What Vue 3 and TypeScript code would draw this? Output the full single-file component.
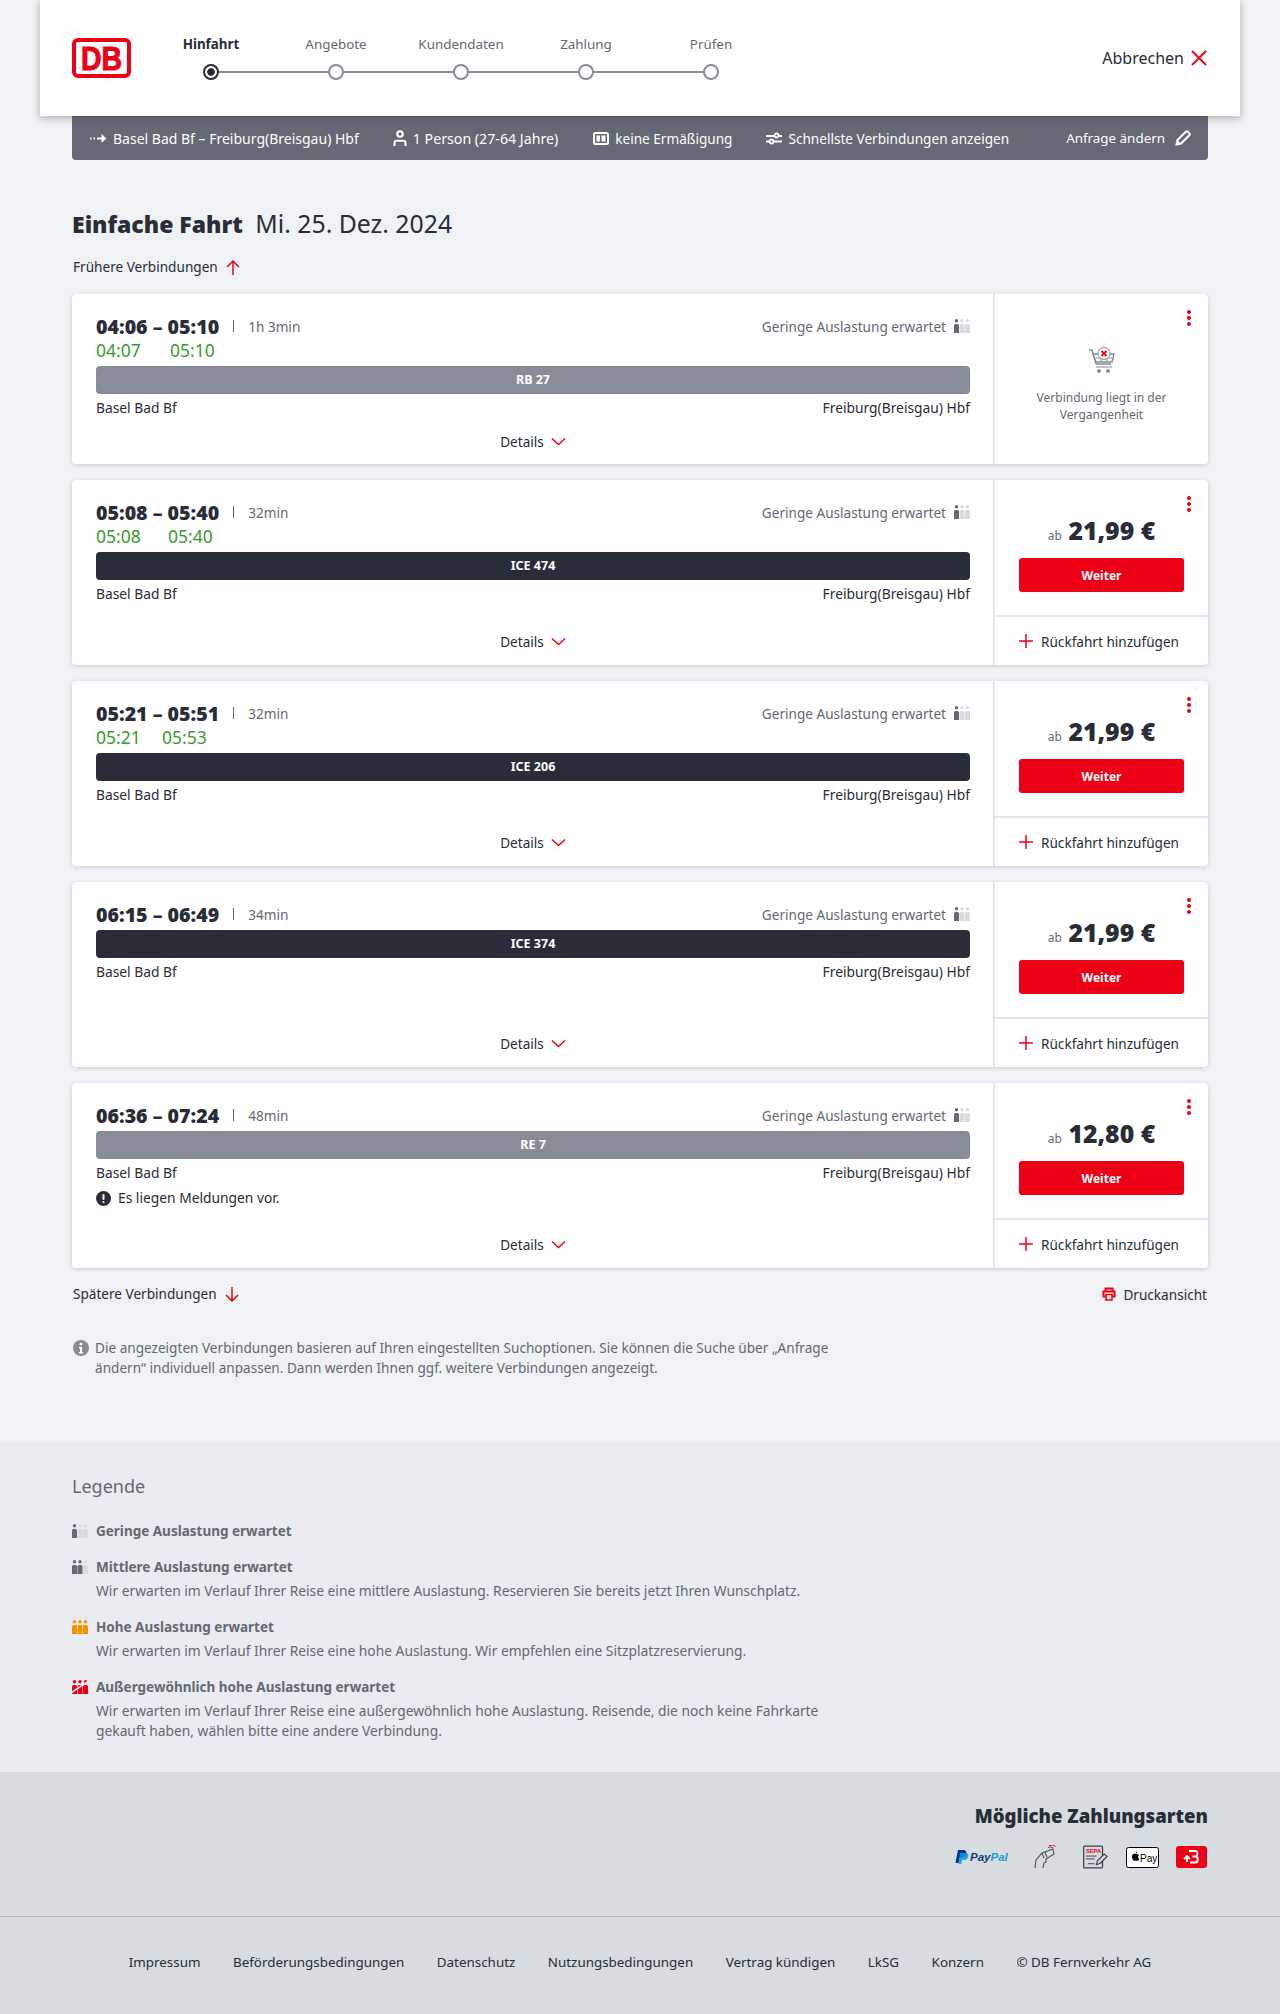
<script setup lang="ts">
import { h } from 'vue'

interface Trip {
  time: string
  duration: string
  dep?: string
  arr?: string
  arrGap?: number
  train: string
  muted?: boolean
  past?: boolean
  price?: string
  notice?: boolean
}

const trips: Trip[] = [
  { time: '04:06 – 05:10', duration: '1h 3min', dep: '04:07', arr: '05:10', arrGap: 74, train: 'RB 27', muted: true, past: true },
  { time: '05:08 – 05:40', duration: '32min', dep: '05:08', arr: '05:40', arrGap: 72, train: 'ICE 474', price: '21,99 €' },
  { time: '05:21 – 05:51', duration: '32min', dep: '05:21', arr: '05:53', arrGap: 66, train: 'ICE 206', price: '21,99 €' },
  { time: '06:15 – 06:49', duration: '34min', train: 'ICE 374', price: '21,99 €' },
  { time: '06:36 – 07:24', duration: '48min', train: 'RE 7', muted: true, price: '12,80 €', notice: true },
]

const steps = ['Hinfahrt', 'Angebote', 'Kundendaten', 'Zahlung', 'Prüfen']

const legend = [
  { level: 1, title: 'Geringe Auslastung erwartet', text: '' },
  { level: 2, title: 'Mittlere Auslastung erwartet', text: 'Wir erwarten im Verlauf Ihrer Reise eine mittlere Auslastung. Reservieren Sie bereits jetzt Ihren Wunschplatz.' },
  { level: 3, title: 'Hohe Auslastung erwartet', text: 'Wir erwarten im Verlauf Ihrer Reise eine hohe Auslastung. Wir empfehlen eine Sitzplatzreservierung.' },
  { level: 4, title: 'Außergewöhnlich hohe Auslastung erwartet', text: 'Wir erwarten im Verlauf Ihrer Reise eine außergewöhnlich hohe Auslastung. Reisende, die noch keine Fahrkarte gekauft haben, wählen bitte eine andere Verbindung.' },
]

const footerLinks = ['Impressum', 'Beförderungsbedingungen', 'Datenschutz', 'Nutzungsbedingungen', 'Vertrag kündigen', 'LkSG', 'Konzern', '© DB Fernverkehr AG']

// three little passengers, filled according to the load level
const LoadIcon = (props: { level: number }) => {
  const on = props.level === 4 ? '#ec0016' : props.level === 3 ? '#f39200' : '#646973'
  const parts = [0, 5.5, 11].flatMap((x, i) => {
    const fill = i < props.level ? on : '#d7dce1'
    return [
      h('circle', { cx: x + 2.5, cy: 1.7, r: 1.7, fill }),
      h('path', { d: `M${x} 14V6.500a1.500 1.500 0 0 1 1.500-1.500h2a1.500 1.500 0 0 1 1.500 1.500V14z`, fill }),
    ]
  })
  if (props.level === 4) {
    parts.push(h('path', { d: 'M-1 13 L15 2', stroke: '#e9ecf0', 'stroke-width': 1.6 }))
  }
  return h('svg', { width: 16, height: 14, viewBox: '0 0 16 14', class: 'load' }, parts)
}
LoadIcon.props = ['level']
</script>

<template>
  <div class="page">
    <header class="top">
      <svg class="logo" width="59" height="40" viewBox="0 0 59 40">
        <rect x="2" y="2" width="55" height="36" rx="4" fill="#fff" stroke="#ec0016" stroke-width="4" />
        <text x="29.500" y="32" text-anchor="middle" textLength="41" lengthAdjust="spacingAndGlyphs" class="logo-text">DB</text>
      </svg>
      <ol class="steps">
        <li v-for="(step, i) in steps" :key="step" class="step" :class="{ 'step--on': i === 0 }">
          <span class="step-label">{{ step }}</span>
          <span class="step-dot"></span>
        </li>
      </ol>
      <a class="cancel">
        Abbrechen
        <svg width="18" height="18" viewBox="0 0 18 18"><path d="M2 2 L16 16 M16 2 L2 16" stroke="#ec0016" stroke-width="1.800" fill="none" /></svg>
      </a>
    </header>

    <div class="query">
      <span class="q-item q-route">
        <svg width="17" height="11" viewBox="0 0 17 11"><path d="M0 5.500h1.500M3.500 5.500h1.500M7 5.500h8" stroke="#fff" stroke-width="2" fill="none" /><path d="M11.500 1 16.500 5.500 11.500 10z" fill="#fff" /></svg>
        Basel Bad Bf – Freiburg(Breisgau) Hbf
      </span>
      <span class="q-item q-person">
        <svg width="14" height="16" viewBox="0 0 14 16"><circle cx="7" cy="4" r="2.800" fill="none" stroke="#fff" stroke-width="2" /><path d="M1.500 16v-3.200c0-1.300 1-2 2-2h7c1 0 2 .7 2 2V16" fill="none" stroke="#fff" stroke-width="2" /></svg>
        1 Person (27-64 Jahre)
      </span>
      <span class="q-item q-card">
        <svg width="16" height="13" viewBox="0 0 16 13"><rect x="1" y="1" width="14" height="11" rx="1.500" fill="none" stroke="#fff" stroke-width="2" /><rect x="3.500" y="3.500" width="3.500" height="6" fill="#fff" /><rect x="8.500" y="3.500" width="4" height="6" fill="#fff" /></svg>
        keine Ermäßigung
      </span>
      <span class="q-item q-fast">
        <svg width="16" height="13" viewBox="0 0 16 13"><path d="M0 4h8M13 4h3M0 9.500h3M8 9.500h8" stroke="#fff" stroke-width="2" /><circle cx="10.500" cy="3.500" r="2" fill="none" stroke="#fff" stroke-width="1.800" /><circle cx="5.500" cy="9.500" r="2" fill="none" stroke="#fff" stroke-width="1.800" /></svg>
        Schnellste Verbindungen anzeigen
      </span>
      <span class="q-item q-edit">
        Anfrage ändern
        <svg width="16" height="16" viewBox="0 0 16 16"><path d="M1.500 14.500 2.500 10 10.800 1.700a1.500 1.500 0 0 1 2.100 0l1.400 1.400a1.500 1.500 0 0 1 0 2.100L6 13.500z" fill="none" stroke="#fff" stroke-width="2" /><path d="M1 15l1.300-5 3.700 3.700z" fill="#fff" /></svg>
      </span>
    </div>

    <main class="content">
      <h1 class="title"><strong>Einfache Fahrt</strong> <span>Mi. 25. Dez. 2024</span></h1>

      <a class="pager pager--up">
        Frühere Verbindungen
        <svg width="16" height="17" viewBox="0 0 16 17"><path d="M8 16V2M2 8l6-6 6 6" stroke="#ec0016" stroke-width="1.500" fill="none" /></svg>
      </a>

      <article v-for="trip in trips" :key="trip.train" class="card" :class="{ 'card--past': trip.past }">
        <div class="trip">
          <div class="trip-head">
            <span class="trip-time">{{ trip.time }}</span>
            <span class="trip-sep"></span>
            <span class="trip-dur">{{ trip.duration }}</span>
            <span class="trip-load">Geringe Auslastung erwartet <LoadIcon :level="1" /></span>
          </div>
          <div v-if="trip.dep" class="trip-live">
            <span class="trip-dep" :style="{ width: (trip.arrGap ?? 0) + 'px' }">{{ trip.dep }}</span>
            <span>{{ trip.arr }}</span>
          </div>
          <div class="train" :class="{ 'train--muted': trip.muted }">{{ trip.train }}</div>
          <div class="stations"><span>Basel Bad Bf</span><span>Freiburg(Breisgau) Hbf</span></div>
          <div v-if="trip.notice" class="notice">
            <svg width="15" height="15" viewBox="0 0 15 15"><circle cx="7.500" cy="7.500" r="7.500" fill="#282d37" /><rect x="6.500" y="3" width="2" height="6" rx="1" fill="#fff" /><circle cx="7.500" cy="11" r="1.100" fill="#fff" /></svg>
            Es liegen Meldungen vor.
          </div>
          <a class="details">
            Details
            <svg width="15" height="9" viewBox="0 0 15 9"><path d="M1 1.500 7.500 7.500 14 1.500" stroke="#ec0016" stroke-width="1.500" fill="none" /></svg>
          </a>
        </div>

        <aside class="offer">
          <span class="more"><i></i><i></i><i></i></span>
          <template v-if="trip.past">
            <div class="past">
              <svg width="28" height="27" viewBox="0 0 28 27">
                <path d="M1 3h3l4 14h15" fill="none" stroke="#878c96" stroke-width="1.300" />
                <path d="M5 7h21l-2 8H8z" fill="none" stroke="#878c96" stroke-width="1.500" />
                <path d="M8 11h16M13 7v8M19 7v8" stroke="#878c96" stroke-width="1" />
                <circle cx="16" cy="6.500" r="6" fill="#fff" stroke="#878c96" stroke-width="1" />
                <path d="M13.500 4l5 5M18.500 4l-5 5" stroke="#ec0016" stroke-width="1.800" />
                <path d="M8 20h16" stroke="#878c96" stroke-width="1" />
                <circle cx="11" cy="24" r="2" fill="#878c96" />
                <circle cx="20" cy="24" r="2" fill="#878c96" />
              </svg>
              <p>Verbindung liegt in der<br />Vergangenheit</p>
            </div>
          </template>
          <template v-else>
            <div class="buy">
              <div class="price"><small>ab</small> {{ trip.price }}</div>
              <button class="weiter">Weiter</button>
            </div>
            <a class="return">
              <svg width="14" height="14" viewBox="0 0 14 14"><path d="M7 0v14M0 7h14" stroke="#ec0016" stroke-width="1.500" /></svg>
              Rückfahrt hinzufügen
            </a>
          </template>
        </aside>
      </article>

      <div class="after">
        <a class="pager">
          Spätere Verbindungen
          <svg width="16" height="17" viewBox="0 0 16 17"><path d="M8 1v14M2 9l6 6 6-6" stroke="#ec0016" stroke-width="1.500" fill="none" /></svg>
        </a>
        <a class="print">
          <svg width="14" height="14" viewBox="0 0 14 14"><path d="M3.500 4V1.500h7V4M3.500 9.500H1.500V4.500h11v5h-2" fill="none" stroke="#ec0016" stroke-width="2" /><path d="M4 7.500h6v5.500H4z" fill="none" stroke="#ec0016" stroke-width="1.600" /></svg>
          Druckansicht
        </a>
      </div>

      <div class="hint">
        <svg width="16" height="16" viewBox="0 0 16 16"><circle cx="8" cy="8" r="8" fill="#878c96" /><circle cx="8" cy="4.200" r="1.400" fill="#fff" /><path d="M6 7h3v5h1v1.500H6V12h1V8.500H6z" fill="#fff" /></svg>
        <p>Die angezeigten Verbindungen basieren auf Ihren eingestellten Suchoptionen. Sie können die Suche über „Anfrage ändern“ individuell anpassen. Dann werden Ihnen ggf. weitere Verbindungen angezeigt.</p>
      </div>
    </main>

    <section class="legend">
      <h2>Legende</h2>
      <div v-for="item in legend" :key="item.level" class="legend-item">
        <LoadIcon :level="item.level" />
        <div>
          <h3>{{ item.title }}</h3>
          <p v-if="item.text">{{ item.text }}</p>
        </div>
      </div>
    </section>

    <section class="pay">
      <h2>Mögliche Zahlungsarten</h2>
      <div class="pay-icons">
        <svg width="56" height="16" viewBox="0 0 56 16">
          <path d="M3 1h5c3 0 4 2 3 4.500S8 9 6 9H4.500L3.500 14H0.500z" fill="#003087" />
          <path d="M5 4h5c3 0 4 1.500 3.200 4S10 11 8 11H7l-.8 4H3.500z" fill="#009cde" opacity=".85" />
          <text x="15" y="12" class="pp"><tspan fill="#113984">Pay</tspan><tspan fill="#179bd7">Pal</tspan></text>
        </svg>
        <svg class="pay-hand" width="23" height="24" viewBox="0 0 23 24">
          <path d="M2 23l1-8 6-7 11-4 1 5-8 5v3l-2 1-1 5M9 8l2 5M12 7l2 5" fill="none" stroke="#4a4f59" stroke-width="1.100" />
          <path d="M15 2.500q3-1.500 5 .5M16 .5q4-1.500 6.500 1" fill="none" stroke="#ec0016" stroke-width="1" />
        </svg>
        <svg class="pay-sepa" width="25" height="24" viewBox="0 0 26 24">
          <rect x=".7" y=".7" width="19.600" height="22.600" rx="1" fill="none" stroke="#3c414b" stroke-width="1.300" />
          <text x="3" y="8" class="sepa">SEPA</text>
          <path d="M3 11h11M3 14h9M5 19h7" stroke="#3c414b" stroke-width="1" />
          <path d="M14 20l1-4 7-7 3 2.500-7 7z" fill="#d7dce1" stroke="#3c414b" stroke-width="1.200" />
        </svg>
        <svg class="pay-apple" width="33" height="21" viewBox="0 0 33 21">
          <rect x=".5" y=".5" width="32" height="20" rx="2" fill="#fff" stroke="#000" />
          <path d="M9.500 7c-1.800-.8-3.500.2-3.500 2.800 0 2 1.200 4.200 2.300 4.200.6 0 .8-.4 1.500-.4s.9.400 1.500.4c.8 0 1.600-1.200 1.900-2.200-1.500-.7-1.600-2.800-.1-3.600-.7-1-2.100-1.300-3.600-1.200zM9.800 6.400c0-1 .7-1.800 1.600-2 .1 1-.7 2-1.600 2z" fill="#000" />
          <text x="14" y="14.500" class="apple">Pay</text>
        </svg>
        <svg class="pay-red" width="31" height="22" viewBox="0 0 31 22">
          <rect width="31" height="22" rx="3" fill="#ec0016" />
          <path d="M13 5h6.500c2.500 0 2.500 5 0 5.500h-3M16.500 10.500h3c3 0 3 6 0 6H14M8 13l3-3 3 3M11 10v6" fill="none" stroke="#fff" stroke-width="1.800" />
        </svg>
      </div>
    </section>

    <footer class="foot">
      <a v-for="link in footerLinks" :key="link">{{ link }}</a>
    </footer>
  </div>
</template>

<style>
body {
  margin: 0;
  background: #f0f3f5;
}
</style>

<style scoped>
.page {
  width: 1280px;
  height: 2014px;
  overflow: hidden;
  font-family: "Noto Sans", "Liberation Sans", sans-serif;
  font-size: 14px;
  color: #282d37;
  background: #f0f3f5;
  display: flex;
  flex-direction: column;
}
a { color: inherit; }
p, h1, h2, h3, ol { margin: 0; padding: 0; }

/* header */
.top {
  position: relative;
  z-index: 2;
  height: 116px;
  margin: 0 40px;
  padding: 0 32px 0 32px;
  background: #fff;
  box-shadow: 0 2px 8px rgba(40, 45, 55, .35);
  display: flex;
  align-items: flex-start;
}
.logo { margin-top: 38px; flex: none; }
.logo-text {
  font-family: "Liberation Sans", sans-serif;
  font-weight: 700;
  font-size: 34px;
  fill: #ec0016;
  stroke: #ec0016;
  stroke-width: 1px;
}
.steps {
  list-style: none;
  display: flex;
  margin: 35px 0 0 17.500px;
}
.step {
  position: relative;
  width: 125px;
  display: flex;
  flex-direction: column;
  align-items: center;
  gap: 11px;
  color: #646973;
  font-size: 13.400px;
}
.step-label { line-height: 18px; }
.step--on { color: #282d37; }
.step--on .step-label { font-weight: 700; }
.step-dot {
  width: 16px;
  height: 16px;
  box-sizing: border-box;
  border: 2px solid #878c96;
  border-radius: 50%;
  background: #fff;
  position: relative;
  z-index: 1;
}
.step--on .step-dot {
  border-color: #282d37;
  background: radial-gradient(circle, #282d37 0 3.500px, #fff 4px);
}
.step:not(:last-child)::after {
  content: '';
  position: absolute;
  left: 62px;
  width: 125px;
  bottom: 7px;
  height: 2px;
  background: #878c96;
}
.cancel {
  margin-left: auto;
  margin-top: 47px;
  display: flex;
  align-items: center;
  gap: 6px;
  font-size: 16px;
  line-height: 22px;
}

/* query bar */
.query {
  height: 44px;
  margin: 0 72px;
  padding: 0 17px 0 18px;
  background: #646973;
  border-radius: 0 0 4px 4px;
  color: #fff;
  display: flex;
  align-items: center;
}
.q-item { display: flex; align-items: center; gap: 6px; white-space: nowrap; }
.q-person { margin-left: 34px; font-size: 14.200px; }
.q-card { margin-left: 35px; font-size: 13.600px; }
.q-fast { margin-left: 34px; font-size: 13.600px; }
.q-edit { margin-left: auto; gap: 10px; font-size: 13.400px; }

/* results */
.content {
  height: 1281px;
  box-sizing: border-box;
  padding: 0 72px;
  flex: none;
}
.title {
  margin-top: 49px;
  height: 28px;
  font-size: 24.800px;
  line-height: 28px;
  font-weight: 400;
  color: #282d37;
}
.title strong { font-size: 23px; font-weight: 900; margin-right: 6px; }
.pager {
  display: inline-flex;
  align-items: center;
  gap: 7px;
  line-height: 20px;
  font-size: 13.600px;
}
.pager--up {
  display: flex;
  margin: 20px 0 17px 1px;
}

.card {
  display: flex;
  background: #fff;
  border-radius: 4px;
  box-shadow: 0 1px 4px rgba(40, 45, 55, .2);
  min-height: 185px;
  margin-bottom: 16px;
}
.card--past { min-height: 170px; }
.trip {
  width: 921px;
  flex: none;
  box-sizing: border-box;
  padding: 20px 23px 0 24px;
  display: flex;
  flex-direction: column;
}
.trip-head {
  display: flex;
  align-items: center;
  height: 24px;
}
.trip-time { font-size: 19.600px; font-weight: 900; }
.trip-sep {
  width: 1px;
  height: 12px;
  background: #646973;
  margin: 0 14px;
}
.trip-dur, .trip-load { color: #646973; font-size: 13.600px; }
.trip-load {
  margin-left: auto;
  display: flex;
  align-items: center;
  gap: 8px;
}
.trip-live {
  height: 24px;
  line-height: 24px;
  font-size: 17.500px;
  color: #3a9a2f;
  display: flex;
}
.trip-dep { flex: none; }
.train {
  margin-top: 4px;
  height: 28px;
  border-radius: 4px;
  background: #282d37;
  color: #fff;
  font-size: 12.500px;
  font-weight: 700;
  line-height: 28px;
  text-align: center;
}
.train--muted { background: #878c96; }
.stations {
  margin-top: 4px;
  display: flex;
  justify-content: space-between;
  line-height: 20px;
  font-size: 13.800px;
}
.notice {
  margin-top: 5px;
  display: flex;
  align-items: center;
  gap: 7px;
  line-height: 20px;
  font-size: 13.800px;
}
.details {
  margin-top: auto;
  height: 48px;
  display: flex;
  align-items: center;
  justify-content: center;
  gap: 7px;
  font-size: 13.600px;
}
.card--past .details { height: 46px; }

.offer {
  position: relative;
  flex: 1;
  border-left: 2px solid #e3e6ea;
  display: flex;
  flex-direction: column;
}
.more {
  position: absolute;
  top: 16px;
  right: 17px;
  display: flex;
  flex-direction: column;
  gap: 2px;
}
.more i {
  width: 4px;
  height: 4px;
  border-radius: 50%;
  background: #ec0016;
}
.past {
  margin-top: 53px;
  display: flex;
  flex-direction: column;
  align-items: center;
  gap: 15px;
}
.past p {
  font-size: 12px;
  line-height: 17px;
  color: #646973;
  text-align: center;
}
.buy {
  height: 137px;
  box-sizing: border-box;
  border-bottom: 2px solid #e3e6ea;
  display: flex;
  flex-direction: column;
  align-items: center;
  padding-top: 33px;
}
.price {
  font-size: 24.800px;
  line-height: 34px;
  font-weight: 900;
}
.price small { font-size: 12px; font-weight: 400; color: #646973; }
.weiter {
  margin-top: 5px;
  width: 165px;
  height: 34px;
  border: 0;
  border-radius: 3px;
  background: #ec0016;
  color: #fff;
  font: 700 12px "Noto Sans", sans-serif;
}
.return {
  flex: 1;
  padding-left: 24px;
  display: flex;
  align-items: center;
  gap: 8px;
  white-space: nowrap;
  font-size: 13.600px;
}

.after {
  margin-top: -4px;
  display: flex;
  justify-content: space-between;
  align-items: center;
  padding: 0 1px;
  height: 28px;
}
.print { display: flex; align-items: center; gap: 7px; font-size: 13.600px; }
.hint {
  margin-top: 30px;
  width: 800px;
  display: flex;
  gap: 6px;
  color: #646973;
  line-height: 20px;
  font-size: 13.600px;
}
.hint svg { margin: 2px 0 0 1px; flex: none; }

/* legend */
.legend {
  height: 331px;
  box-sizing: border-box;
  flex: none;
  padding: 33px 72px 0;
  background: #e9ecf0;
  color: #646973;
}
.legend h2 {
  font-size: 18px;
  line-height: 24px;
  font-weight: 400;
  margin-bottom: 23px;
}
.legend-item {
  display: flex;
  gap: 8px;
  width: 800px;
  margin-bottom: 16px;
}
.legend-item .load { flex: none; margin-top: 3px; }
.legend-item h3 {
  font-size: 13.500px;
  line-height: 20px;
  font-weight: 700;
}
.legend-item p {
  margin-top: 4px;
  max-width: 750px;
  line-height: 20px;
  font-size: 13.800px;
}

/* payment + footer */
.pay {
  height: 145px;
  box-sizing: border-box;
  flex: none;
  padding: 30px 72px 0;
  background: #d7dce1;
  border-bottom: 1px solid #b4b9c1;
  text-align: right;
}
.pay h2 {
  font-size: 18.600px;
  line-height: 28px;
  font-weight: 900;
}
.pay-icons {
  margin-top: 15px;
  display: flex;
  justify-content: flex-end;
  align-items: center;
  padding-right: 1px;
}
.pay-hand { margin-left: 22px; }
.pay-sepa { margin-left: 27px; }
.pay-apple { margin-left: 18px; }
.pay-red { margin-left: 17px; }
.pp {
  font: italic 700 11.500px "Liberation Sans", sans-serif;
}
.sepa {
  font: 700 6px "Liberation Sans", sans-serif;
  fill: #ec0016;
}
.apple {
  font: 500 10px "Liberation Sans", sans-serif;
  fill: #000;
}
.foot {
  flex: 1;
  background: #d7dce1;
  display: flex;
  justify-content: center;
  gap: 32.500px;
  padding-top: 35px;
  line-height: 20px;
  font-size: 13.400px;
}
</style>
